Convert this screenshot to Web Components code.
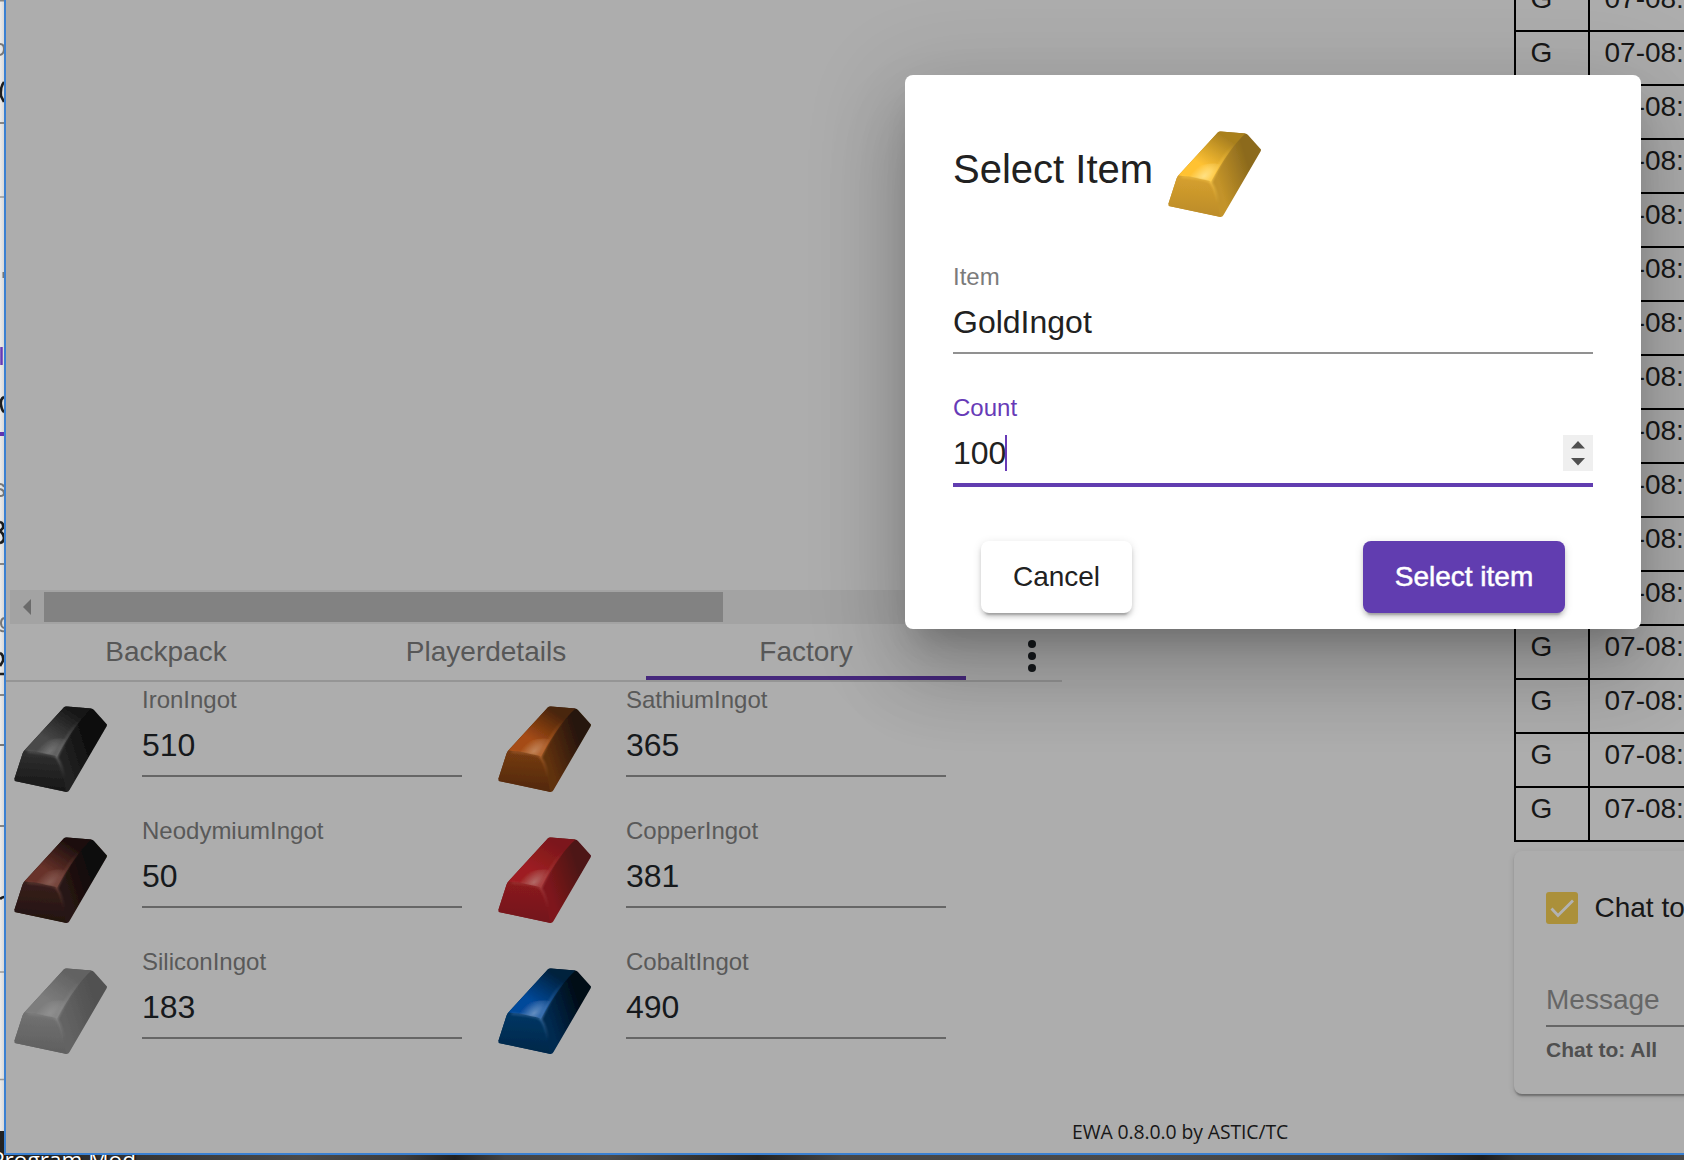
<!DOCTYPE html>
<html lang="en">
<head>
<meta charset="utf-8">
<title>EWA</title>
<style>
html,body{margin:0;width:1684px;height:1160px;overflow:hidden}
body{font-family:"Liberation Sans",Arial,sans-serif;color:#16191c}
</style>
</head>
<body>
<ewa-screen></ewa-screen>
<script>
const define=(name,render)=>customElements.define(name,class extends HTMLElement{
  connectedCallback(){
    if(this.shadowRoot)return;
    this.attachShadow({mode:'open'}).innerHTML=render(this);
  }
});

const METALS={
  iron:{a:'#191919',b:'#484848',hi:'#777777',f1:'#303030',f2:'#181818',s1:'#222222',s2:'#090909',e:'#777777'},
  neodymium:{a:'#1a0e0d',b:'#673229',hi:'#885e56',f1:'#38201c',f2:'#231310',s1:'#281513',s2:'#0c0807',e:'#7a4c43'},
  silicon:{a:'#626262',b:'#7d7d7d',hi:'#929292',f1:'#717171',f2:'#606060',s1:'#636363',s2:'#515151',e:'#8e8e8e'},
  sathium:{a:'#4a250c',b:'#a54b14',hi:'#c48a60',f1:'#753b12',f2:'#54290e',s1:'#5f300f',s2:'#281607',e:'#b96e37'},
  copper:{a:'#7c171a',b:'#9e1f22',hi:'#b4716d',f1:'#8a1a1d',f2:'#74171a',s1:'#7e181b',s2:'#4e1214',e:'#ac4a4a'},
  cobalt:{a:'#02213d',b:'#06499a',hi:'#6d95c4',f1:'#053664',f2:'#03284a',s1:'#042a50',s2:'#010d18',e:'#4f7fb4'},
  gold:{a:'#a9801f',b:'#ffc233',hi:'#ffe48c',f1:'#d6a02e',f2:'#bd8d29',s1:'#c39329',s2:'#8c6a1d',e:'#ffce50'}
};

define('ingot-icon',el=>{
  const c=METALS[el.getAttribute('metal')];
  return `<style>:host{display:block;flex:none;width:94px;height:87px}svg{display:block;overflow:visible}</style>
  <svg width="94" height="87" viewBox="0 0 94 86.500" preserveAspectRatio="none">
    <defs>
      <linearGradient id="t" gradientUnits="userSpaceOnUse" x1="64" y1="0" x2="32" y2="50"><stop offset="0" stop-color="${c.a}"/><stop offset=".15" stop-color="${c.a}"/><stop offset=".75" stop-color="${c.b}"/><stop offset="1" stop-color="${c.b}"/></linearGradient>
      <linearGradient id="f" gradientUnits="userSpaceOnUse" x1="28" y1="46" x2="26" y2="82"><stop offset="0" stop-color="${c.f1}"/><stop offset="1" stop-color="${c.f2}"/></linearGradient>
      <linearGradient id="s" gradientUnits="userSpaceOnUse" x1="48" y1="42" x2="80" y2="32"><stop offset="0" stop-color="${c.s1}"/><stop offset="1" stop-color="${c.s2}"/></linearGradient>
      <radialGradient id="h" gradientUnits="userSpaceOnUse" cx="0" cy="0" r="1" gradientTransform="translate(36 45) rotate(-20) scale(22 11)"><stop offset="0" stop-color="${c.hi}" stop-opacity=".9"/><stop offset=".4" stop-color="${c.hi}" stop-opacity=".55"/><stop offset="1" stop-color="${c.hi}" stop-opacity="0"/></radialGradient>
      <linearGradient id="r" gradientUnits="userSpaceOnUse" x1="43" y1="50" x2="66" y2="14"><stop offset="0" stop-color="${c.e}" stop-opacity=".8"/><stop offset="1" stop-color="${c.e}" stop-opacity="0"/></linearGradient>
      <linearGradient id="d" gradientUnits="userSpaceOnUse" x1="42" y1="50" x2="50" y2="72"><stop offset="0" stop-color="${c.e}" stop-opacity=".7"/><stop offset="1" stop-color="${c.e}" stop-opacity="0"/></linearGradient>
      <filter id="b" x="-10%" y="-10%" width="120%" height="120%"><feGaussianBlur stdDeviation=".75"/></filter>
      <filter id="b2" x="-50%" y="-50%" width="200%" height="200%"><feGaussianBlur stdDeviation="1"/></filter>
      <clipPath id="tc"><path d="M10.3 44.3 52 .6 78.5 2.6Q60 14 43 50.5 38 48 10.3 44.3Z"/></clipPath>
    </defs>
    <g filter="url(#b)">
      <path d="M10.3 44.3 50 1.2Q51 .4 53 .6L77 2.4Q79 2.5 80 4L93 18.5 92.8 20 55.5 83.5Q54 86.5 51 85.2L.8 74.6.5 72 8.500 47.5Q9 45.5 10.3 44.3Z" fill="url(#s)"/>
      <path d="M10.3 44.3Q38 46.5 43 50.5 48 58 52 85.2L.8 74.6.5 72 8.500 47.5Z" fill="url(#f)"/>
      <path d="M10.3 44.3 50 1.2Q51 .4 53 .6L77.5 2.4Q62 16 43 50.5 38 46.8 10.3 44.3Z" fill="url(#t)"/>
      <g clip-path="url(#tc)"><ellipse cx="36" cy="45" rx="22" ry="11" transform="rotate(-20 36 45)" fill="url(#h)"/></g>
    </g>
    <g fill="none" stroke-linecap="round" filter="url(#b2)">
      <path d="M43 50.5Q55 24 66 14" stroke="url(#r)" stroke-width="2.2"/>
      <path d="M14 45.6Q34 47.2 42 50.5" stroke="${c.e}" stroke-width="1.5" opacity=".6"/>
      <path d="M42.5 50.5Q48 58 50 72" stroke="url(#d)" stroke-width="2"/>
    </g>
  </svg>`;
});

define('text-field',el=>{
  const focus=el.hasAttribute('focused');
  return `<style>
  :host{display:flex;flex-direction:column;height:131px;width:320px;flex:none;color:var(--ink,#16191c)}
  .l{font-size:24px;line-height:28px;height:28px;color:var(--label,#595959);margin-bottom:13px;white-space:nowrap}
  .v{display:flex;justify-content:space-between;font-size:32px;line-height:36px;height:36px;margin-bottom:12px}
  .t{display:flex}.caret{width:2px;background:#673ab7;margin-left:-1px}
  .u{height:2px;background:var(--line,#666)}
  :host([focused]) .l{color:#673ab7}:host([focused]) .u{height:4px;background:#613db0}
  svg{display:block}
  </style><div class="l">${el.getAttribute('label')}</div>
  <div class="v"><span class="t"><slot></slot>${focus?'<i class="caret"></i>':''}</span>${focus?'<svg width="30" height="36"><rect width="30" height="36" fill="#efefef"/><path d="M8 13.5 15 6l7 7.5ZM8 23h14l-7 7.5Z" fill="#505050"/></svg>':''}</div><div class="u"></div>`;
});

define('ingot-cell',el=>`<style>:host{display:flex;width:484px;height:131px}ingot-icon{margin:20px 34px 0 8px}</style>
  <ingot-icon metal="${el.getAttribute('metal')}"></ingot-icon><text-field label="${el.getAttribute('label')}"><slot></slot></text-field>`);

define('raised-button',()=>`<style>:host{display:block;box-sizing:border-box;height:72px;line-height:72px;text-align:center;font-size:28px;border-radius:8px;color:#212121;background:#fff;box-shadow:0 6px 2px -4px #0003,0 4px 4px 0 #00000024,0 2px 10px 0 #0000001f}
  :host([primary]){background:#613db0;color:#fff;-webkit-text-stroke:.5px #fff}</style><slot></slot>`);

define('select-dialog',()=>`<style>
  :host{display:block;position:absolute;left:905px;top:75px;width:736px;height:554px;box-sizing:border-box;border-radius:8px;background:#fff;padding:0 48px;
  --ink:#212121;--label:#7b7b7b;--line:#919191;box-shadow:0 22px 30px -14px #0003,0 48px 76px 6px #00000024,0 18px 92px 16px #0000001f}
  header{display:flex;height:188px;color:#212121}
  h2{margin:69px 15px 0 0;width:200px;font-size:40px;line-height:50px;font-weight:400;white-space:nowrap}
  ingot-icon{margin-top:56px}
  text-field{width:640px}
  footer{display:flex;justify-content:space-between;padding:16px 28px 0}
  </style>
  <header><h2>Select Item</h2><ingot-icon metal="gold"></ingot-icon></header>
  <text-field label="Item">GoldIngot</text-field>
  <text-field label="Count" focused>100</text-field>
  <footer><raised-button style="width:151px">Cancel</raised-button><raised-button primary style="width:202px">Select item</raised-button></footer>`);

define('tab-bar',()=>`<style>
  :host{display:flex;width:1056px;height:56px;border-bottom:2px solid #959595;font-size:28px;color:#575757}
  .t{width:320px;text-align:center;line-height:56px;height:52px}
  .on{border-bottom:4px solid #46287c}
  svg{margin:8px 0 0 42px}
  </style><div class="t">Backpack</div><div class="t">Playerdetails</div><div class="t on">Factory</div>
  <svg width="48" height="48" fill="#16191c"><circle cx="24" cy="12" r="4"/><circle cx="24" cy="24" r="4"/><circle cx="24" cy="36" r="4"/></svg>`);

define('scroll-track',()=>`<style>:host{display:flex;width:1052px;height:34px;margin-left:4px;background:#a3a3a3;align-items:center}
  svg{width:34px;height:34px}i{width:679px;height:30px;background:#828282}</style>
  <svg><path d="M21 9v16L13 17Z" fill="#6b6b6b"/></svg><i></i>`);

define('log-table',()=>`<style>:host{display:block;margin-top:-24px;border-bottom:2px solid #000;font-size:28px;line-height:36px;color:#171717}
  .r{display:flex;height:52px;border-top:2px solid #000}
  span{box-sizing:border-box;border-left:2px solid #000;padding:3px 0 0 14.5px;width:74px;flex:none}span+span{width:200px}</style>
  ${'<div class="r"><span>G</span><span>07-08:</span></div>'.repeat(16)}`);

define('chat-card',()=>`<style>:host{display:block;box-sizing:border-box;width:300px;height:243px;margin-top:9px;padding:41px 32px 0;border-radius:8px;background:#adadad;font-size:28px;box-shadow:0 4px 2px -2px #0003,0 2px 2px 0 #00000024,0 2px 6px 0 #0000001f}
  .c{display:flex;gap:16.5px;height:32px;line-height:31px;color:#171717;white-space:nowrap}
  .m{margin-top:56px;line-height:40px;height:45px;color:#666;border-bottom:2px solid #666;padding-top:0}
  .h{font-size:21px;font-weight:700;line-height:24px;margin-top:11px;color:#4f4f4f}</style>
  <div class="c"><svg width="32" height="32"><rect width="32" height="32" rx="3" fill="#ab903a"/><path d="M5.5 16.5 12 23.5 27 8.500" fill="none" stroke="#b2b2b2" stroke-width="2.8"/></svg>Chat to</div>
  <div class="m">Message</div><div class="h">Chat to: All</div>`);

define('ewa-window',()=>`<style>
  :host{display:flex;box-sizing:border-box;width:1680px;height:1155px;overflow:hidden;background:#adadad;border-left:2px solid #3a80d2;border-bottom:2px solid #3a80d2}
  .main{display:flex;flex-direction:column;width:1508px;flex:none}
  .view{height:590px}
  .grid{display:grid;grid-template-columns:484px 484px;padding-top:4px}
  .foot{margin:auto 0 7px 1066px;font:19.4px/28px "Open Sans","Noto Sans",sans-serif;letter-spacing:-.1px;color:#171717;white-space:nowrap}
  .side{width:170px;flex:none}
  </style>
  <div class="main"><div class="view"></div><scroll-track></scroll-track><tab-bar></tab-bar>
  <div class="grid">
    <ingot-cell metal="iron" label="IronIngot">510</ingot-cell><ingot-cell metal="sathium" label="SathiumIngot">365</ingot-cell>
    <ingot-cell metal="neodymium" label="NeodymiumIngot">50</ingot-cell><ingot-cell metal="copper" label="CopperIngot">381</ingot-cell>
    <ingot-cell metal="silicon" label="SiliconIngot">183</ingot-cell><ingot-cell metal="cobalt" label="CobaltIngot">490</ingot-cell>
  </div><div class="foot">EWA 0.8.0.0 by ASTIC/TC</div></div>
  <div class="side"><log-table></log-table><chat-card></chat-card></div>`);

// Sliver of the window underneath, visible along the left edge.
define('back-window',()=>`<style>:host{display:block;width:4px;height:1131px;overflow:hidden;background:linear-gradient(90deg,#ebebeb,#d9d9d9)}svg{display:block}</style>
  <svg width="4" height="1131" fill="none" stroke="#1d1d1d" stroke-width="2.6">
    <path d="M0 0.5H4M0 123H4M0 564H4M0 695H4M0 826H4" stroke="#858585" stroke-width="2"/>
    <path d="M0 197H4M0 972H4M0 1079.500H4" stroke="#999" stroke-width="1.500"/>
    <path d="M0 44Q4 44 4 49T0 55M0 484Q3 484 4 487M0 489Q4 490 4 493T0 496M4 618Q1 619 1 623T4 628M0 630Q2 632 4 631M0 745H4M3.500 272V278" stroke="#777" stroke-width="2"/>
    <path d="M4 82Q0 87 1 96L4 102M4 397Q0 399 1 405T4 412M0 522Q4 523 3 528L0 531Q4 534 4 538T0 543M0 653Q4 655 3 661L0 666M0 674H4M0 899Q2 897 4 897"/>
    <path d="M1.500 347V365" stroke="#673ab7" stroke-width="2.500"/><path d="M0 434H4" stroke="#5e35b1" stroke-width="4"/>
  </svg>`);

define('ewa-screen',()=>`<style>
  :host{display:grid;position:relative;width:1684px;height:1160px;overflow:hidden}
  :host>*{grid-area:1/1}
  .desk{display:flex;align-items:flex-end;height:1160px;overflow:hidden;background:linear-gradient(90deg,#222 0,#353535 8%,#4a4a4a 18%,#3c3c3c 24%,#202020 27%,#444 30%,#4b4b4b 36%,#303030 42%,#222 45%,#474747 50%,#4b4b4b 68%,#404040 82%,#1c1c1c 88%,#333 90%,#484848 100%)}
  .desk span{margin:0 0 -16px -9px;font:22.600px/32px "Open Sans",sans-serif;color:#fff;text-shadow:1px 1px 2px #000;white-space:nowrap}
  ewa-window{margin-left:4px}
  </style><div class="desk"><span>Program Mod</span></div><back-window></back-window><ewa-window></ewa-window><select-dialog></select-dialog>`);
</script>
</body>
</html>
